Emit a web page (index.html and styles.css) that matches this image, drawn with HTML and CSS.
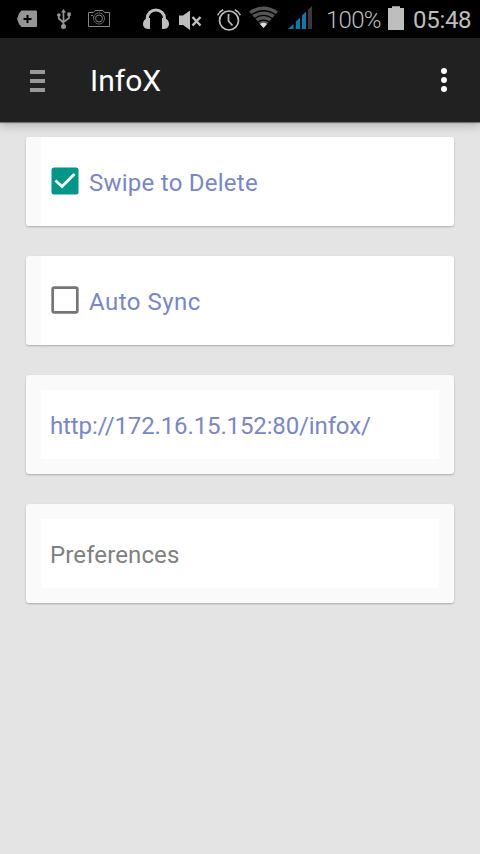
FILE: index.html
```
<!DOCTYPE html>
<html lang="en">
<head>
<meta charset="utf-8">
<title>InfoX</title>
<link rel="stylesheet" href="styles.css">
</head>
<body>
<div class="status">
  <div class="group notices">
    <svg width="21" height="38" viewBox="17 0 21 38"><path d="M21.5 10.5H36a1 1 0 0 1 1 1V26a1 1 0 0 1-1 1H21.5L19 24l-2-5 2-5.500z" fill="#959595"/><path d="M27.500 15v8M23.500 19h8" stroke="#000" stroke-width="2"/></svg>
    <svg width="14" height="38" viewBox="57 0 14 38"><g fill="none" stroke="#959595" stroke-width="1.700"><path d="M63.500 11v15M58.800 15v3.500l4.700 4M69 14.500v3.500l-5.500 4"/></g><path d="M63.500 9l2.500 3.500h-5zM67.300 12.500h3.500V16h-3.500z" fill="#959595"/><circle cx="58.800" cy="15" r="1.800" fill="#959595"/><circle cx="63.500" cy="26.500" r="2.500" fill="#959595"/></svg>
    <svg width="22" height="38" viewBox="88 0 22 38"><g fill="none" stroke="#858585"><path d="M88.500 12.500h5l1.500-2h8l1.500 2h5v14h-21z"/><circle cx="99" cy="18.500" r="5.500" stroke-dasharray="2 .5"/><circle cx="99" cy="18.500" r="3.500"/><path d="M91 15.500h2"/></g></svg>
  </div>
  <div class="group system">
    <svg width="26" height="38" viewBox="143 0 26 38"><path d="M147.300 20v-1.500a8.500 8.500 0 0 1 17.200 0V20" fill="none" stroke="#bebebe" stroke-width="3"/><path d="M150 18v11h-2c-3 0-5-2-5-5.200 0-3 2-5.300 5-5.800zM162 18v11h2c3 0 5-2 5-5.200 0-3-2-5.300-5-5.800z" fill="#bebebe"/></svg>
    <svg width="23" height="38" viewBox="180 0 23 38"><path d="M180 15.500h4l7-5V30l-7-5h-4z" fill="#bebebe"/><path d="M193.500 17l8 8.500m0-8.500l-8 8.500" stroke="#bebebe" stroke-width="2.500"/></svg>
    <svg width="24" height="38" viewBox="217 0 24 38"><g fill="none" stroke="#bebebe" stroke-width="1.700"><circle cx="229" cy="20.500" r="9.500"/><path d="M228.500 14v7l4 4.500M217.700 15.200q1.500-3.700 5.500-5.500M240.300 15.200q-1.500-3.700-5.500-5.500"/></g></svg>
    <svg width="29" height="38" viewBox="249 0 29 38"><path d="M249 11.500Q263.500 1.500 278 11.500L263.500 28z" fill="#555"/><g fill="none" stroke="#000" stroke-width="1.300"><path d="M251 15q12.500-8.500 25 0M254.500 18.500q9-6.200 18 0M257.500 22.300q6-4.300 12 0"/></g><path d="M260 24q3.500-2.500 7 0l-3.500 4z" fill="#ddd"/></svg>
    <svg width="24" height="38" viewBox="288 0 24 38"><path d="M288 29l5.500-5v5zM295.800 21.700l4.200-4V29h-4.200zM302 15.500l4-4V29h-4z" fill="#087cac"/><path d="M308 9.700l4-3.700v23h-4z" fill="#3a3a3a"/></svg>
    <span class="percent">100%</span>
    <svg width="16" height="38" viewBox="388 0 16 38"><path d="M388 8h4V6.200h8V8h4v22h-16z" fill="#bebebe"/></svg>
    <span class="clock">05:48</span>
  </div>
</div>
<header class="appbar">
  <div class="menu"><i></i><i></i><i></i></div>
  <h1>InfoX</h1>
  <div class="more"><i></i><i></i><i></i></div>
</header>
<main class="cards">
  <label class="card option">
    <svg width="28" height="28" viewBox="0 0 28 28"><rect x=".5" y=".5" width="27" height="27" rx="2.500" fill="#009688"/><path d="M4.500 13.500l6.500 6L23.500 7" fill="none" stroke="#fff" stroke-width="2.800"/></svg>
    <span class="option-text">Swipe to Delete</span>
  </label>
  <label class="card option">
    <svg width="28" height="28" viewBox="0 0 28 28"><rect x="1.700" y="1.700" width="24.600" height="24.600" rx="1.500" fill="none" stroke="#757575" stroke-width="2.700"/></svg>
    <span class="option-text sync">Auto Sync</span>
  </label>
  <div class="card framed"><div class="field url"><span>http://172.16.15.152:80/infox/</span></div></div>
  <div class="card framed"><div class="field prefs"><span>Preferences</span></div></div>
</main>
</body>
</html>
```
FILE: styles.css
```
* { box-sizing: border-box; }
body {
  margin: 0;
  height: 854px;
  overflow: hidden;
  background: #e4e4e4;
  font-family: Roboto, "Liberation Sans", sans-serif;
}
svg { display: block; flex: none; }
.status {
  display: flex;
  justify-content: space-between;
  height: 38px;
  padding: 0 9px 0 17px;
  background: #000;
}
.group { display: flex; }
.notices svg + svg { margin-left: 19px; }
.notices svg:last-child { margin-left: 17px; }
.system {
  color: #bebebe;
  font-size: 24px;
  line-height: 40px;
}
.system svg:nth-child(2) { margin-left: 10px; }
.system svg:nth-child(3) { margin-left: 15px; }
.system svg:nth-child(4) { margin-left: 8px; }
.system svg:nth-child(5) { margin-left: 10px; }
.percent {
  width: 62px;
  margin-left: 14px;
  font-weight: 300;
  letter-spacing: -.7px;
  white-space: nowrap;
}
.clock {
  width: 58px;
  margin-left: 9px;
  letter-spacing: -.3px;
  white-space: nowrap;
}
.appbar {
  display: flex;
  align-items: center;
  height: 84px;
  padding: 0 33px 0 30px;
  background: #212121;
  color: #fff;
  position: relative;
  box-shadow: 0 1px 1px rgba(0, 0, 0, .4), 0 3px 10px rgba(0, 0, 0, .24);
}
.menu { display: grid; gap: 5px; width: 15px; margin-top: 2px; }
.menu i { height: 4px; background: #999; }
h1 { margin: 2px 0 0 45px; font-size: 30px; font-weight: 400; line-height: 36px; }
.more { display: grid; gap: 3px; margin-left: auto; }
.more i { width: 6px; height: 6px; border-radius: 50%; background: #fff; }
.cards { display: grid; gap: 30px; padding: 15px 26px; }
.card {
  border-radius: 3px;
  background: #fafafa;
  box-shadow: 0 1px 2px rgba(0, 0, 0, .25);
  font-size: 24px;
  color: #7986cb;
}
.option {
  display: flex;
  align-items: center;
  height: 89px;
  padding: 0 0 1px 25px;
  background: linear-gradient(90deg, #fafafa 15px, #fff 15px);
}
.option-text { margin: 3px 0 0 10px; letter-spacing: .25px; }
.sync { letter-spacing: .48px; }
.framed { height: 99px; padding: 15px; }
.field {
  display: flex;
  align-items: center;
  height: 69px;
  padding: 2px 9px 0;
  background: #fff;
}
.url { letter-spacing: -.13px; }
.prefs { color: #808080; letter-spacing: .12px; }
```
